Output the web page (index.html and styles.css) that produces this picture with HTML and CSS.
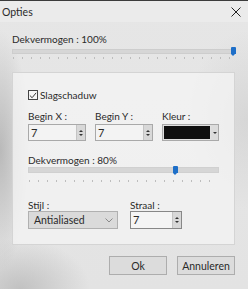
FILE: index.html
```html
<!DOCTYPE html>
<html lang="nl">
<head>
  <meta charset="UTF-8">
  <title>Opties</title>
  <link rel="stylesheet" href="styles.css">
</head>
<body>
  <div class="window">
    <div class="titlebar">
      <span class="title">Opties</span>
      <span class="close">
        <svg width="10" height="10" viewBox="0 0 10 10"><path d="M0.5 0.5 L9.5 9.5 M9.5 0.5 L0.5 9.5" stroke="#222" stroke-width="1"/></svg>
      </span>
    </div>

    <div class="content">
      <div class="label top-label">Dekvermogen : 100%</div>
      <div class="slider">
        <div class="track"></div>
        <div class="thumb" style="left: 219px"></div>
        <div class="ticks"></div>
      </div>

      <div class="group">
        <label class="check">
          <span class="box">
            <svg width="9" height="9" viewBox="0 0 9 9"><path d="M1 4.5 L3.5 7 L8 1.5" stroke="#333" stroke-width="1.1" fill="none"/></svg>
          </span>
          Slagschaduw
        </label>

        <div class="fields">
          <div class="field">
            <div class="label">Begin X :</div>
            <div class="spin"><span class="val">7</span><span class="arrows"><i class="up"></i><i class="down"></i></span></div>
          </div>
          <div class="field">
            <div class="label">Begin Y :</div>
            <div class="spin"><span class="val">7</span><span class="arrows"><i class="up"></i><i class="down"></i></span></div>
          </div>
          <div class="field">
            <div class="label">Kleur :</div>
            <div class="color"><span class="swatch"></span><span class="drop"><i class="down"></i></span></div>
          </div>
        </div>

        <div class="label mid-label">Dekvermogen : 80%</div>
        <div class="slider small">
          <div class="track"></div>
          <div class="thumb" style="left: 145px"></div>
          <div class="ticks"></div>
        </div>

        <div class="fields bottom">
          <div class="field">
            <div class="label">Stijl :</div>
            <div class="select">Antialiased
              <svg width="8" height="5" viewBox="0 0 8 5"><path d="M0.5 0.5 L4 4 L7.5 0.5" stroke="#8a8a8a" fill="none"/></svg>
            </div>
          </div>
          <div class="field">
            <div class="label">Straal :</div>
            <div class="spin straal"><span class="val">7</span><span class="arrows"><i class="up"></i><i class="down"></i></span></div>
          </div>
        </div>
      </div>

      <div class="buttons">
        <button>Ok</button>
        <button>Annuleren</button>
      </div>
    </div>
  </div>
</body>
</html>
```

FILE: styles.css
```css
body { margin: 0; }

.window {
  width: 248px;
  height: 289px;
  overflow: hidden;
  font-family: Lato, "Noto Sans", sans-serif;
  font-size: 10px;
  color: #2a2a2a;
  background:
    radial-gradient(ellipse 30px 120px at 0px 150px, rgba(150,150,150,0.55), rgba(150,150,150,0)),
    radial-gradient(ellipse 70px 50px at 20px 289px, rgba(160,160,160,0.5), rgba(160,160,160,0)),
    radial-gradient(ellipse 60px 90px at 248px 120px, rgba(200,200,200,0.5), rgba(200,200,200,0)),
    linear-gradient(180deg, #e6e6e6, #e3e3e3);
}

.titlebar {
  height: 21px;
  border-top: 1px solid #3c3c3c;
  display: flex;
  align-items: center;
  justify-content: space-between;
  padding: 0 7px 0 2px;
  background: #ebebeb;
}
.title { font-size: 10.5px; }
.close { display: flex; }

.content { padding: 11px 13px 0 12px; }

.label { line-height: 12px; white-space: nowrap; }
.top-label { height: 12px; }

.slider { position: relative; height: 24px; }
.track {
  position: absolute;
  left: 0; right: 0; top: 4px;
  height: 3px;
  background: #d6d6d6;
  border: 1px solid #cdcdcd;
}
.thumb {
  position: absolute;
  top: 2px;
  width: 5px;
  height: 7px;
  background: #1e6fc8;
  border-radius: 1px 1px 0 0;
}
.thumb::after {
  content: "";
  position: absolute;
  left: 0; top: 7px;
  border-left: 2.5px solid transparent;
  border-right: 2.5px solid transparent;
  border-top: 2px solid #1e6fc8;
}
.ticks {
  position: absolute;
  left: 1px; right: 1px; top: 12px;
  height: 2px;
  background: repeating-linear-gradient(90deg, #bdbdbd 0 1px, transparent 1px 9px);
}

.group {
  margin-top: 3px;
  height: 173px;
  box-sizing: border-box;
  border: 1px solid #d4d4d4;
  background: rgba(244,244,244,0.75);
  padding: 17px 15px 0 15px;
}

.check { display: flex; align-items: center; gap: 2px; height: 10px; }
.box {
  width: 8px; height: 8px;
  border: 1px solid #444;
  background: #f6f6f6;
  display: flex; align-items: center; justify-content: center;
}

.fields { display: flex; gap: 9px; margin-top: 10px; }
.fields .label { height: 14px; }

.spin, .color, .select {
  height: 17px;
  box-sizing: border-box;
  display: flex;
}
.spin {
  width: 58px;
  border: 1px solid #a9a9a9;
  background: #f3f3f3;
}
.val { flex: 1; padding-left: 2px; line-height: 15px; font-size: 11px; }
.arrows {
  width: 8px;
  background: #d8d8d8;
  border-left: 1px solid #c4c4c4;
  display: flex; flex-direction: column; justify-content: center; align-items: center; gap: 2px;
}
.up, .down { display: block; width: 0; height: 0; border-left: 2px solid transparent; border-right: 2px solid transparent; }
.up { border-bottom: 2px solid #333; }
.down { border-top: 2px solid #333; }

.color {
  width: 57px;
  border: 1px solid #a9a9a9;
  background: #e0e0e0;
}
.swatch { width: 46px; background: #0f0f0f; margin: 1px; }
.drop { flex: 1; display: flex; align-items: center; justify-content: center; background: #dcdcdc; }

.mid-label { margin-top: 13px; }
.slider.small .track { top: 1px; height: 4px; border-color: #d0d0d0; }
.slider.small .thumb { top: 0; }
.slider.small .ticks { top: 14px; }

.fields.bottom { gap: 12px; margin-top: 9px; }
.bottom .label { height: 12px; }
.select {
  width: 90px;
  height: 18px;
  border: 1px solid #b0b0b0;
  background: #dadada;
  align-items: center;
  justify-content: space-between;
  padding: 0 4px 0 5px;
  font-size: 10.5px;
}
.spin.straal { width: 52px; height: 18px; border-color: #888; background: #f5f5f5; }
.straal .val { line-height: 16px; }

.buttons { display: flex; justify-content: flex-end; gap: 10px; margin-top: 11px; }
button {
  width: 58px; height: 19px;
  font-family: inherit; font-size: 10.5px; color: #2a2a2a;
  background: #dcdcdc;
  border: 1px solid #adadad;
  padding: 0;
}
```
